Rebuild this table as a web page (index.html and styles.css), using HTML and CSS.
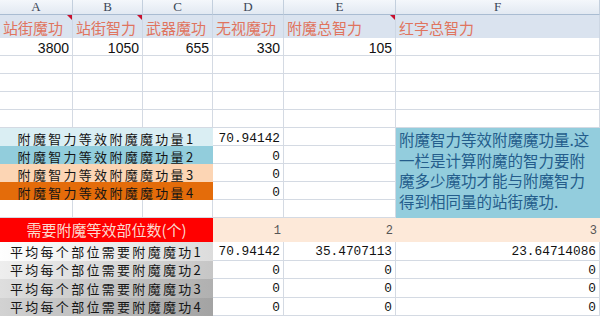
FILE: index.html
```html
<!DOCTYPE html>
<html lang="zh-CN">
<head>
<meta charset="utf-8">
<title>附魔计算表</title>
<link rel="stylesheet" href="styles.css">
</head>
<body>
<div class="sheet">
  <div class="hd">A</div><div class="hd">B</div><div class="hd">C</div><div class="hd">D</div><div class="hd">E</div><div class="hd">F</div>

  <div class="tt note">站街魔功</div><div class="tt note">站街智力</div><div class="tt">武器魔功</div><div class="tt">无视魔功</div><div class="tt note">附魔总智力</div><div class="tt">红字总智力</div>

  <div class="c num">3800</div><div class="c num">1050</div><div class="c num">655</div><div class="c num">330</div><div class="c num">105</div><div class="c"></div>

  <div class="c"></div><div class="c"></div><div class="c"></div><div class="c"></div><div class="c"></div><div class="c"></div>
  <div class="c"></div><div class="c"></div><div class="c"></div><div class="c"></div><div class="c"></div><div class="c"></div>
  <div class="c"></div><div class="c"></div><div class="c"></div><div class="c"></div><div class="c"></div><div class="c"></div>
  <div class="c"></div><div class="c"></div><div class="c"></div><div class="c"></div><div class="c"></div><div class="c"></div>

  <div class="lbl l1">附魔智力等效附魔魔功量1</div><div class="c mono low">70.94142</div><div class="c"></div>
  <div class="box">附魔智力等效附魔魔功量.这<br>一栏是计算附魔的智力要附<br>魔多少魔功才能与附魔智力<br>得到相同量的站街魔功.</div>
  <div class="lbl l2">附魔智力等效附魔魔功量2</div><div class="c mono low">0</div><div class="c"></div>
  <div class="lbl l3">附魔智力等效附魔魔功量3</div><div class="c mono low">0</div><div class="c"></div>
  <div class="lbl l4">附魔智力等效附魔魔功量4</div><div class="c mono low">0</div><div class="c"></div>
  <div class="c"></div><div class="c"></div><div class="c"></div><div class="c"></div><div class="c"></div>

  <div class="red">需要附魔等效部位数(个)</div><div class="cnt">1</div><div class="cnt">2</div><div class="cnt">3</div>

  <div class="lbl g1">平均每个部位需要附魔魔功1</div><div class="c mono">70.94142</div><div class="c mono">35.4707113</div><div class="c mono">23.64714086</div>
  <div class="lbl g2">平均每个部位需要附魔魔功2</div><div class="c mono">0</div><div class="c mono">0</div><div class="c mono">0</div>
  <div class="lbl g3">平均每个部位需要附魔魔功3</div><div class="c mono">0</div><div class="c mono">0</div><div class="c mono">0</div>
  <div class="lbl g4">平均每个部位需要附魔魔功4</div><div class="c mono">0</div><div class="c mono">0</div><div class="c mono">0</div>
</div>
</body>
</html>
```
FILE: styles.css
```css
html, body {
  margin: 0;
  padding: 0;
  background: #ffffff;
  overflow: hidden;
}

.sheet {
  display: grid;
  grid-template-columns: 73px 70px 70px 71px 112px 204px;
  grid-template-rows: 15px 23px repeat(10, 18px) 24px 19px 18px 19px 18px;
  width: 600px;
  height: 316px;
  font-family: "Noto Sans CJK SC", "Liberation Sans", sans-serif;
}

.sheet > div {
  box-sizing: border-box;
  white-space: nowrap;
  overflow: hidden;
}

.hd {
  background: linear-gradient(#f4f7fb, #e2e9f2);
  border-right: 1px solid #c3cfdd;
  border-bottom: 1px solid #a9bcd2;
  font-family: "Liberation Serif", serif;
  font-size: 13px;
  line-height: 14px;
  color: #3a4656;
  text-align: center;
}

.tt {
  position: relative;
  background: #dae3ef;
  border-right: 1px solid #cdd7e4;
  color: #e0745e;
  font-size: 15px;
  line-height: 21px;
  padding: 2px 0 0 3px;
}

.tt.note::after {
  content: "";
  position: absolute;
  top: 0;
  right: 0;
  border-top: 5px solid #c8102e;
  border-left: 5px solid transparent;
}

.c {
  border-right: 1px solid #d4dae3;
  border-bottom: 1px solid #d4dae3;
  background: #ffffff;
  text-align: right;
  padding-right: 3px;
}

.num {
  font-family: "Liberation Sans", sans-serif;
  font-size: 14px;
  line-height: 16px;
  padding-top: 2px;
  color: #111;
}

.mono {
  font-family: "Liberation Mono", monospace;
  font-size: 12.8px;
  line-height: 17px;
  padding-top: 1px;
  color: #111;
}

.sheet > .mono.low {
  line-height: 18px;
  padding-top: 2px;
  overflow: visible;
}

.lbl {
  grid-column: span 3;
  text-align: center;
  font-size: 13px;
  letter-spacing: 2.3px;
  color: #151515;
  font-weight: 400;
  line-height: 18px;
}

.sheet > .l1, .sheet > .l2, .sheet > .l3, .sheet > .l4 {
  line-height: 18px;
  padding-top: 2px;
  overflow: visible;
}
.l1 { background: #daeef3; }
.l2 { background: #92cddc; }
.l3 { background: #fcd5b4; }
.l4 { background: #e46c0a; }

.g1 { background: linear-gradient(to right, #fefefe, #dcdcdc); line-height: 19px; }
.g2 { background: linear-gradient(to right, #eeeeee, #c6c6c6); }
.g3 { background: linear-gradient(to right, #dedede, #b0b0b0); line-height: 19px; }
.g4 { background: linear-gradient(to right, #d2d2d2, #a3a3a3); }

.box {
  grid-column: 6;
  grid-row: span 5;
  background: #93cddd;
  color: #245d8c;
  font-size: 15.5px;
  line-height: 20.5px;
  padding: 1px 3px 0 3px;
}

.red {
  grid-column: span 3;
  background: #ff0000;
  color: #fbd9cf;
  font-size: 15px;
  line-height: 24px;
  text-align: center;
}

.cnt {
  background: #fde9d9;
  font-family: "Liberation Mono", monospace;
  font-size: 12px;
  line-height: 22px;
  padding-top: 2px;
  color: #555;
  text-align: right;
  padding-right: 3px;
}
```
